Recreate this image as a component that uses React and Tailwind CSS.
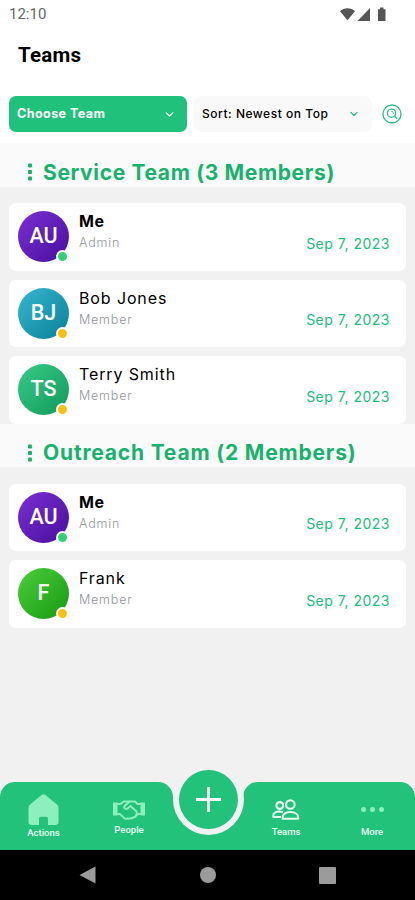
import { clsx } from 'clsx'
import { ChevronDown } from 'lucide-react'

const TEAMS = [
  {
    title: 'Service Team (3 Members)',
    titleClass: 'tracking-[0.65px]',
    members: [
      { initials: 'AU', name: 'Me', role: 'Admin', online: true, color: 'from-[#7a2fd0] to-[#4a0ba0]' },
      { initials: 'BJ', name: 'Bob Jones', role: 'Member', color: 'from-[#35b9d0] to-[#067f9a]' },
      { initials: 'TS', name: 'Terry Smith', role: 'Member', color: 'from-[#36ca85] to-[#0e9a5c]' },
    ],
  },
  {
    title: 'Outreach Team (2 Members)',
    titleClass: 'tracking-[0.82px]',
    members: [
      { initials: 'AU', name: 'Me', role: 'Admin', online: true, color: 'from-[#7a2fd0] to-[#4a0ba0]' },
      { initials: 'F', name: 'Frank', role: 'Member', color: 'from-[#4ace3a] to-[#129a0e]' },
    ],
  },
]

const StatusBar = () => (
  <div className="flex h-7 items-center justify-between pr-[29px] pl-[9px] font-['Roboto',sans-serif] text-[#666]">
    <span className="text-[15px] leading-none">12:10</span>
    <svg width="46" height="15" viewBox="0 0 46 15" fill="#555">
      <path d="M0 4.2C4.2.2 10.8.2 15 4.2L7.5 13.2z" />
      <path d="M30 1v13H17.5z" />
      <path d="M38 2.2h2V.5h3.500v1.700H45.500V14H38z" />
    </svg>
  </div>
)

const SearchIcon = () => (
  <svg width="20" height="20" viewBox="0 0 20 20" fill="none" stroke="#2dbd83" strokeLinecap="round">
    <circle cx="10" cy="10" r="9" strokeWidth="1.3" />
    <circle cx="9.500" cy="9.200" r="4.100" strokeWidth="1.300" />
    <path d="M12.600 12.200l1.900 2" strokeWidth="1.500" />
    <path d="M9.500 7.200a2 2 0 0 1 2 2" strokeWidth="0.800" />
  </svg>
)

const Filters = () => (
  <div className="flex h-[58px] items-center bg-white pl-[9px] text-[12px]">
    <div className="flex h-9 w-[178px] items-center justify-between rounded-[7px] bg-[#20c17b] pr-[11px] pl-[8px] font-bold text-white">
      <span className="text-[12.5px] tracking-[0.45px]">Choose Team</span>
      <ChevronDown size={13} strokeWidth={2.5} />
    </div>
    <div className="ml-[7px] flex h-9 w-[178px] items-center justify-between rounded-[8px] bg-[#f9f9f9] pr-[12px] pl-[8px] font-medium text-black">
      <span className="tracking-[0.52px]">Sort: Newest on Top</span>
      <ChevronDown size={12} strokeWidth={2.5} className="text-[#2dbd83]" />
    </div>
    <div className="ml-[10px]">
      <SearchIcon />
    </div>
  </div>
)

const MemberCard = ({ member }) => (
  <div className="flex h-[67.5px] rounded-[7px] bg-white pr-4 pl-[9px]">
    <div
      className={clsx(
        'relative mt-[8px] flex size-[51px] items-center justify-center rounded-full bg-linear-to-br text-[21.5px] text-white',
        member.color
      )}
    >
      <span className="font-['Roboto',sans-serif] font-medium">{member.initials}</span>
      <span
        className={clsx(
          'absolute right-0 -bottom-px size-[13px] rounded-full border-2 border-white',
          member.online ? 'bg-[#35cf78]' : 'bg-[#fbc012]'
        )}
      />
    </div>
    <div className="ml-[10px] flex flex-col pt-[8px]">
      <span
        className={clsx(
          'text-[16px] leading-5 text-black',
          member.name === 'Me' ? 'font-bold tracking-[0.5px]' : 'font-normal tracking-[0.88px]'
        )}
      >
        {member.name}
      </span>
      <span className="mt-[4px] text-[12.5px] leading-4 font-light tracking-[0.8px] text-[#92969c]">{member.role}</span>
    </div>
    <span className="mt-[30.5px] ml-auto text-[14px] leading-5 tracking-[0.5px] text-[#20bd7a]">Sep 7, 2023</span>
  </div>
)

const TeamSection = ({ team }) => (
  <section>
    <div className="flex h-[43.5px] items-center bg-[#fafafa] pt-[15px] pl-[27px]">
      <svg width="6" height="18" viewBox="0 0 6 18" fill="#18b26d">
        <rect x="1" y="0.500" width="4" height="4" rx="1" />
        <rect x="1" y="7" width="4" height="4" rx="1" />
        <rect x="1" y="13.500" width="4" height="4" rx="1" />
      </svg>
      <h2 className={clsx('ml-[10px] text-[21px] leading-none font-bold whitespace-nowrap text-[#18b26d]', team.titleClass)}>
        {team.title}
      </h2>
    </div>
    <div className="flex flex-col gap-[9px] px-[9px] pt-[16.5px]">
      {team.members.map((member) => (
        <MemberCard key={member.name} member={member} />
      ))}
    </div>
  </section>
)

const HomeIcon = () => (
  <svg width="31" height="31" viewBox="0 0 31 31" fill="#8cefbd">
    <path d="M13.600 1a3 3 0 0 1 3.800 0L29 10.500q1.500 1.300 1.500 3V28a3 3 0 0 1-3 3H20v-6.500a1.800 1.800 0 0 0-1.800-1.800h-5.400a1.800 1.800 0 0 0-1.800 1.800V31H3.500a3 3 0 0 1-3-3V13.500q0-1.700 1.500-3z" />
  </svg>
)

const HandshakeIcon = () => (
  <svg width="32" height="20" viewBox="0 0 32 20" fill="none" stroke="#8cefbd" strokeWidth="2" strokeLinejoin="round" strokeLinecap="round">
    <path d="M0 2.500h4.500v13H0zM27.500 2.500H32v13h-4.500z" fill="#8cefbd" stroke="none" />
    <path d="M5 4h2.500L10.500 1.500h11.500L24.500 4H27" />
    <path d="M5 14h1.800l4.700 4.200q1.500 1.100 3 .3q1.700.7 3-.3q1.900.5 3-1q1.900.2 2.700-1.700L25 14h2" />
    <path d="M16.500 1.500l-4.700 4.300q-1.200 1.500.2 2.700q1.300 1 2.700-.1L17.500 6l6 5.500q1 1.500-.3 3.500" />
  </svg>
)

const TeamIcon = () => (
  <svg width="28" height="21" viewBox="0 0 28 21" fill="none" stroke="#e9fff4" strokeWidth="2.100" strokeLinejoin="round">
    <circle cx="18.300" cy="5.500" r="4.300" />
    <path d="M10.500 19c0-4 3.500-6 7.900-6s7.900 2 7.900 6q0 .8-.8.8H11.300q-.8 0-.8-.8z" />
    <circle cx="7.800" cy="6.500" r="3.400" />
    <path d="M9 18H2q-.8 0-.8-.8c0-3 2.800-4.700 6.200-4.700q2 0 3.600.7" />
  </svg>
)

const Tab = ({ label, className, children }) => (
  <div className={clsx('flex flex-col items-center text-[9.5px] leading-3 font-medium text-[#e9fff4]', className)}>
    {children}
    <span>{label}</span>
  </div>
)

const TabBar = () => (
  <nav className="relative flex h-[68px] items-end font-['Roboto',sans-serif]">
    <div className="flex h-full w-[173px] rounded-t-[15px] bg-[#22c27b]">
      <Tab label="Actions" className="w-[87px] gap-[2px] pt-[11.5px]">
        <HomeIcon />
      </Tab>
      <Tab label="People" className="w-[84px] gap-[4px] pt-[17.5px]">
        <HandshakeIcon />
      </Tab>
    </div>
    <div className="h-[51px] w-[70px] bg-[#22c27b]" />
    <div className="flex h-full w-[172px] rounded-t-[15px] bg-[#22c27b]">
      <Tab label="Teams" className="w-[86px] gap-[6px] pt-[16.5px]">
        <TeamIcon />
      </Tab>
      <Tab label="More" className="w-[86px] gap-[13px] pt-[24px]">
        <svg width="23" height="7" viewBox="0 0 23 7" fill="#8cefbd">
          <circle cx="2.500" cy="3.500" r="2.500" />
          <circle cx="11.500" cy="3.500" r="2.500" />
          <circle cx="20.500" cy="3.500" r="2.500" />
        </svg>
      </Tab>
    </div>
    {/* floating add button, sits in the notch */}
    <button className="absolute -top-[18px] left-[172.5px] flex size-[71px] items-center justify-center rounded-full bg-[#f1f1f1]">
      <span className="flex size-[59px] items-center justify-center rounded-full bg-[#22c27b]">
        <svg width="25" height="25" viewBox="0 0 25 25" stroke="#fff" strokeWidth="2.800">
          <path d="M12.500 0v25M0 12.500h25" />
        </svg>
      </span>
    </button>
  </nav>
)

const SystemNav = () => (
  <div className="flex h-[50px] items-center justify-between bg-black pr-[79px] pl-[79px]">
    <svg width="17" height="18" viewBox="0 0 17 18" fill="#9b9b9b">
      <path d="M16.500 .5v17L.5 9z" />
    </svg>
    <span className="size-[16px] rounded-full bg-[#9b9b9b]" />
    <span className="size-[17px] rounded-[1px] bg-[#9b9b9b]" />
  </div>
)

export default function App() {
  return (
    <div className="flex h-[900px] w-[415px] flex-col overflow-hidden bg-[#f1f1f1] font-['Inter',sans-serif]">
      <header className="h-[85px] bg-white">
        <StatusBar />
        <h1 className="mt-[13px] pl-[18px] font-['Roboto',sans-serif] text-[20.5px] leading-7 font-bold tracking-[0.2px] text-black">
          Teams
        </h1>
      </header>
      <Filters />
      <main className="flex-1">
        {TEAMS.map((team) => (
          <TeamSection key={team.title} team={team} />
        ))}
      </main>
      <TabBar />
      <SystemNav />
    </div>
  )
}
